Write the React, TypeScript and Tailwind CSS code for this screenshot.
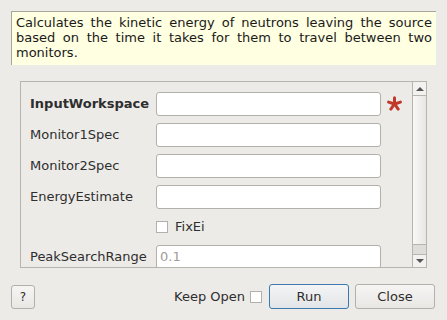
import React from 'react'

const font = { fontFamily: '"DejaVu Sans", sans-serif' }

function Star() {
  return (
    <svg width="15" height="15" viewBox="0 0 16 16" className="ml-[6px] shrink-0" stroke="#c0392b" strokeWidth="3.2" strokeLinecap="round">
      <line x1="8" y1="8.5" x2="8" y2="1.8" />
      <line x1="8" y1="8.5" x2="14.3" y2="6.5" />
      <line x1="8" y1="8.5" x2="11.9" y2="14" />
      <line x1="8" y1="8.5" x2="4.1" y2="14" />
      <line x1="8" y1="8.5" x2="1.7" y2="6.5" />
    </svg>
  )
}

function Field({ label, bold, placeholder, required }: { label: string; bold?: boolean; placeholder?: string; required?: boolean }) {
  return (
    <div className="flex items-center h-[31px]">
      <div className={`w-[135px] shrink-0 pl-[9px] text-[13px] text-[#2e2e2e] whitespace-nowrap ${bold ? 'font-bold' : ''}`}>{label}</div>
      <div className="w-[225px] shrink-0 h-[24px] rounded-[3px] border border-[#b3afaa] bg-white text-[13px] text-[#a09d99] pl-[3px] flex items-center">
        {placeholder}
      </div>
      {required && <Star />}
    </div>
  )
}

export default function App() {
  return (
    <div style={font} className="w-[447px] h-[320px] bg-[#edebe8] relative overflow-hidden">
      <div className="absolute left-[11px] top-[11px] w-[425px] h-[54px] bg-[#ffffe1] border-t border-l border-[#a8a59f] px-[4px] pt-[3px] text-[13px] leading-[15px] text-[#1a1a1a] text-justify">
        Calculates the kinetic energy of neutrons leaving the source based on the time it takes for them to travel between two monitors.
      </div>

      <div className="absolute left-[20px] top-[81px] w-[407px] h-[187px] border border-[#b8b4ae] flex">
        <div className="flex-1 overflow-hidden pt-[6px]">
          <Field label="InputWorkspace" bold required />
          <Field label="Monitor1Spec" />
          <Field label="Monitor2Spec" />
          <Field label="EnergyEstimate" />
          <div className="flex items-center h-[29px] pl-[135px]">
            <div className="w-[12px] h-[12px] border border-[#b3afaa] bg-white" />
            <span className="ml-[7px] text-[13px] text-[#2e2e2e]">FixEi</span>
          </div>
          <Field label="PeakSearchRange" placeholder="0.1" />
        </div>
        <div className="w-[14px] border-l border-[#b8b4ae] flex flex-col">
          <div className="h-[13px] flex items-center justify-center bg-[#f3f2f0]">
            <div className="w-0 h-0 border-l-[4px] border-r-[4px] border-b-[4px] border-l-transparent border-r-transparent border-b-[#555]" />
          </div>
          <div className="flex-1 border-t border-[#b8b4ae] bg-gradient-to-r from-[#f8f8f7] to-[#e9e7e4]" />
          <div className="h-[10px] border-t border-[#b8b4ae] bg-[#dfddd9]" />
          <div className="h-[13px] border-t border-[#b8b4ae] flex items-center justify-center bg-[#f3f2f0]">
            <div className="w-0 h-0 border-l-[4px] border-r-[4px] border-t-[4px] border-l-transparent border-r-transparent border-t-[#555]" />
          </div>
        </div>
      </div>

      <div className="absolute left-[11px] right-[12px] top-[284px] flex items-center">
        <button className="w-[24px] h-[24px] rounded-[3px] border border-[#b3afaa] bg-gradient-to-b from-[#f6f5f4] to-[#e9e7e4] text-[12px] text-[#2e2e2e]">?</button>
        <div className="flex-1" />
        <span className="text-[13px] text-[#2e2e2e]">Keep Open</span>
        <div className="ml-[5px] w-[12px] h-[12px] border border-[#b3afaa] bg-white" />
        <button className="ml-[7px] w-[80px] h-[25px] rounded-[3px] border border-[#3b79ae] bg-gradient-to-b from-[#f4f4f4] to-[#e2e5e8] text-[13px] text-[#2e2e2e]">Run</button>
        <button className="ml-[6px] w-[80px] h-[25px] rounded-[3px] border border-[#b3afaa] bg-gradient-to-b from-[#f6f5f4] to-[#e9e7e4] text-[13px] text-[#2e2e2e]">Close</button>
      </div>
    </div>
  )
}
